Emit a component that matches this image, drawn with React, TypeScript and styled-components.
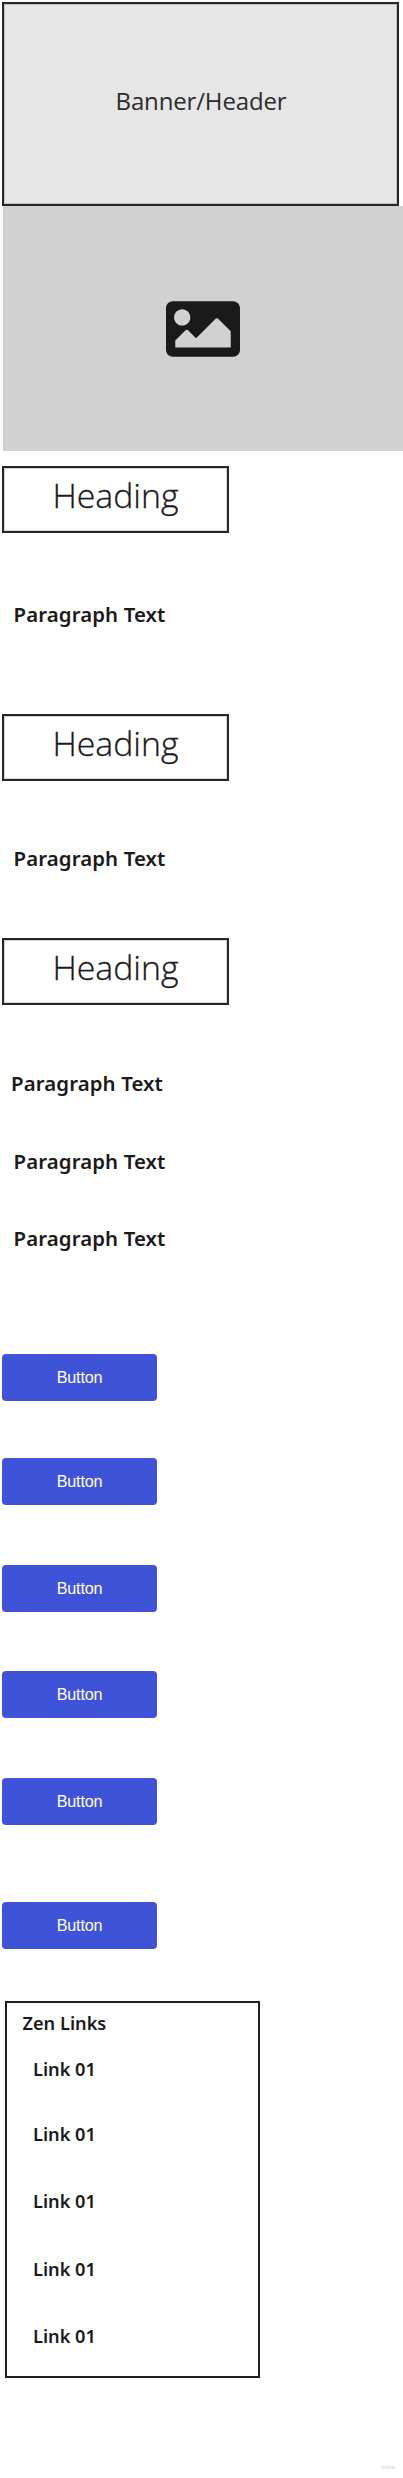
import React from "react";
import styled, { createGlobalStyle } from "styled-components";

const GlobalStyle = createGlobalStyle`
  *, *::before, *::after { box-sizing: border-box; }
  body { margin: 0; background: #fff; color: #1a1a1a; }
`;

const Page = styled.main`
  display: flex;
  flex-direction: column;
  align-items: flex-start;
  width: 403px;
  height: 2478px;
  padding: 2px 0 0 2px;
  overflow: hidden;
  font-family: "Noto Sans", "Open Sans", sans-serif;
`;

const Banner = styled.header`
  display: flex;
  align-items: center;
  justify-content: center;
  width: 397px;
  height: 204px;
  padding: 0 0 6px 1px;
  border: 2px solid #262626;
  box-shadow: inset 0 0 0 1px rgba(26, 26, 26, 0.18);
  background: #e6e6e6;
  color: #2c2c2c;
  font: 400 24px/32px "Open Sans", sans-serif;
  letter-spacing: -0.15px;
`;

const ImagePlaceholder = styled.div`
  display: flex;
  justify-content: center;
  width: 400.5px;
  height: 245px;
  margin-left: 0.5px;
  padding: 86px 0 0;
  background: #d1d1d1;
`;

const ImageIcon = styled.svg`
  width: 74px;
  height: 74px;
  fill: #1a1a1a;
`;

const Heading = styled.h2<{ $gap: number }>`
  display: flex;
  justify-content: center;
  width: 227px;
  height: 67px;
  margin: ${(p) => p.$gap}px 0 0;
  padding: 4px 0 0;
  border: 2px solid #262626;
  box-shadow: inset 0 0 0 1px rgba(26, 26, 26, 0.18);
  font: 300 33.8px/46px "Open Sans", sans-serif;
  -webkit-text-stroke: 0.3px #1a1a1a;
`;

const Paragraph = styled.p<{ $gap: number; $indent?: number }>`
  margin: ${(p) => p.$gap}px 0 0 ${(p) => p.$indent ?? 11.5}px;
  font-size: 20.4px;
  font-weight: 600;
  line-height: 28px;
  letter-spacing: 0.11px;
`;

const Button = styled.button<{ $gap: number }>`
  width: 155px;
  height: 47px;
  margin: ${(p) => p.$gap}px 0 0;
  padding: 0 0 1px;
  border: 0;
  border-radius: 4px;
  background: #3f53d9;
  color: #fff;
  font: 16.2px/20px "Liberation Sans", Arial, sans-serif;
  letter-spacing: -0.2px;
`;

const LinksPanel = styled.nav`
  width: 255px;
  height: 377px;
  margin: 52px 0 0 3px;
  padding: 8px 0 0 15.5px;
  border: 2px solid #1f1f1f;
  font-size: 18.2px;
  font-weight: 600;
  line-height: 24px;
`;

const LinksTitle = styled.div``;

const LinkItem = styled.a<{ $gap: number }>`
  display: block;
  margin: ${(p) => p.$gap}px 0 0 10.5px;
`;

const Mark = styled.footer`
  align-self: flex-end;
  margin: 84px 8px 0 0;
  color: #d8d8e0;
  font-size: 6px;
  font-weight: 600;
  line-height: 10px;
`;

const buttonGaps = [102, 57, 60, 59, 60, 77];
const linkGaps = [22, 41, 43, 44, 43];

export default function App() {
  return (
    <>
      <GlobalStyle />
      <Page>
        <Banner>Banner/Header</Banner>
        <ImagePlaceholder>
          <ImageIcon viewBox="0 0 512 512" aria-hidden="true">
            <path d="M464 448H48c-26.51 0-48-21.49-48-48V112c0-26.51 21.49-48 48-48h416c26.51 0 48 21.49 48 48v288c0 26.51-21.49 48-48 48zM112 120c-30.928 0-56 25.072-56 56s25.072 56 56 56 56-25.072 56-56-25.072-56-56-56zM64 384h384V272l-87.515-87.515c-4.686-4.686-12.284-4.686-16.971 0L208 320l-55.515-55.515c-4.686-4.686-12.284-4.686-16.971 0L64 336v48z" />
          </ImageIcon>
        </ImagePlaceholder>
        <Heading $gap={15}>Heading</Heading>
        <Paragraph $gap={67}>Paragraph Text</Paragraph>
        <Heading $gap={86}>Heading</Heading>
        <Paragraph $gap={63}>Paragraph Text</Paragraph>
        <Heading $gap={66}>Heading</Heading>
        <Paragraph $gap={64} $indent={9}>Paragraph Text</Paragraph>
        <Paragraph $gap={50}>Paragraph Text</Paragraph>
        <Paragraph $gap={49}>Paragraph Text</Paragraph>
        {buttonGaps.map((gap, i) => (
          <Button key={i} $gap={gap}>Button</Button>
        ))}
        <LinksPanel>
          <LinksTitle>Zen Links</LinksTitle>
          {linkGaps.map((gap, i) => (
            <LinkItem key={i} $gap={gap}>Link 01</LinkItem>
          ))}
        </LinksPanel>
        <Mark>miro</Mark>
      </Page>
    </>
  );
}
